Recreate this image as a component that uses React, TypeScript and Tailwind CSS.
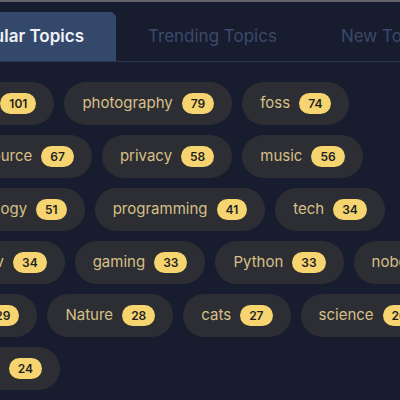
const font = { fontFamily: '"Inter", "Liberation Sans", sans-serif' };

type Topic = { name: string; count: number };

const rows: Topic[][] = [
  [
    { name: "books", count: 101 },
    { name: "photography", count: 79 },
    { name: "foss", count: 74 },
  ],
  [
    { name: "opensource", count: 67 },
    { name: "privacy", count: 58 },
    { name: "music", count: 56 },
  ],
  [
    { name: "technology", count: 51 },
    { name: "programming", count: 41 },
    { name: "tech", count: 34 },
  ],
  [
    { name: "webdev", count: 34 },
    { name: "gaming", count: 33 },
    { name: "Python", count: 33 },
    { name: "nobody", count: 30 },
  ],
  [
    { name: "pics", count: 29 },
    { name: "Nature", count: 28 },
    { name: "cats", count: 27 },
    { name: "science", count: 26 },
  ],
  [{ name: "memes", count: 24 }],
];

const Chip = ({ name, count }: Topic) => (
  <div className="flex items-center shrink-0 h-[43px] px-[18px] gap-[9px] rounded-full bg-[#2d2e33]">
    <span className="text-[15px] text-[#d6c088] whitespace-nowrap">{name}</span>
    <span className="flex items-center justify-center h-[21px] px-[9px] rounded-full bg-[#f6d46f] text-[12px] font-semibold text-[#1f1f24]">
      {count}
    </span>
  </div>
);

export default function App() {
  return (
    <div className="w-[400px] h-[400px] overflow-hidden bg-[#171c2e]" style={font}>
      <div className="h-[2px] bg-[#626369]" />
      <div className="ml-[-70px] w-[600px]">
        <div className="flex items-end h-[60px] border-b border-[#273552]">
          <div className="flex items-center h-[49px] px-8 rounded-tr-md bg-[#34486b]">
            <span className="text-[17px] font-semibold text-[#eef1f6] whitespace-nowrap">Popular Topics</span>
          </div>
          <div className="flex items-center h-[49px] px-8">
            <span className="text-[17px] text-[#3b4a6b] whitespace-nowrap">Trending Topics</span>
          </div>
          <div className="flex items-center h-[49px] px-8">
            <span className="text-[17px] text-[#3b4a6b] whitespace-nowrap">New Topics</span>
          </div>
        </div>
        <div className="flex flex-col gap-[10px] pt-5">
          {rows.map((row, i) => (
            <div key={i} className="flex gap-[10px]">
              {row.map((t) => (
                <Chip key={t.name} {...t} />
              ))}
            </div>
          ))}
        </div>
      </div>
    </div>
  );
}
